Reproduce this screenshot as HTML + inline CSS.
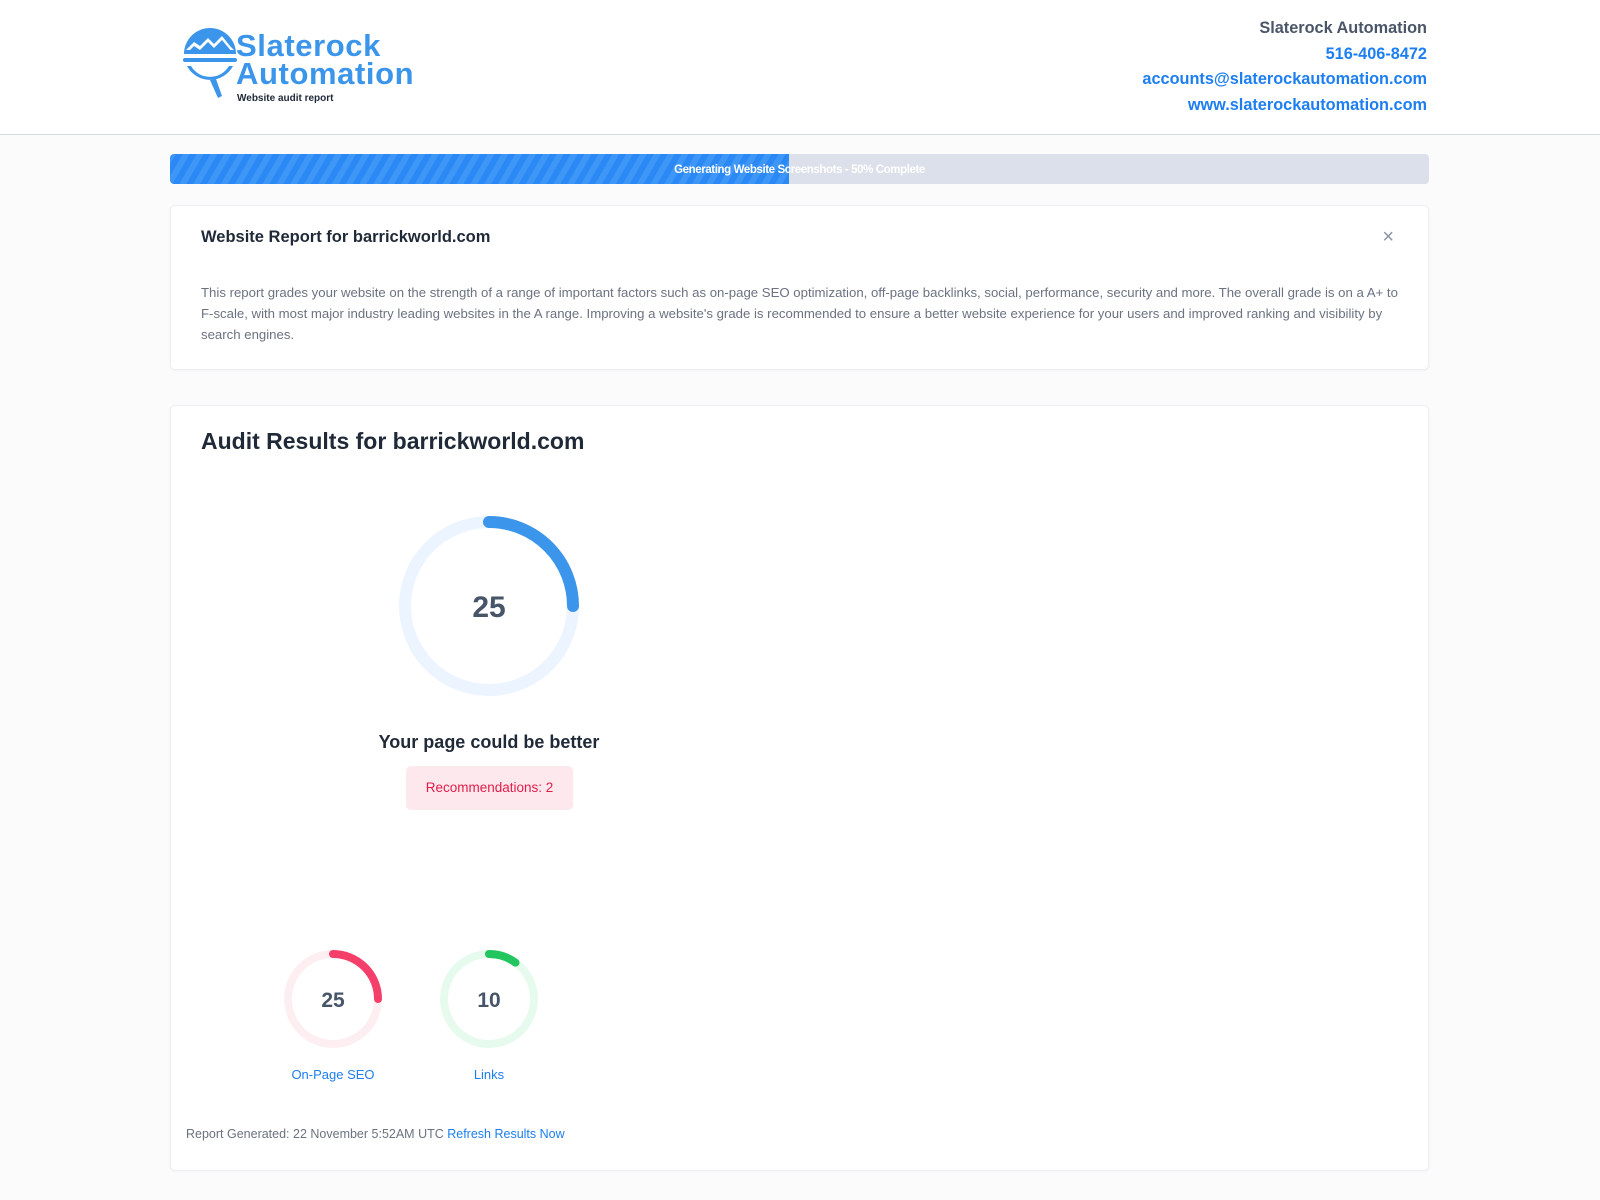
<!DOCTYPE html>
<html><head><meta charset="utf-8"><style>
*{margin:0;padding:0;box-sizing:border-box}
body{width:1600px;height:1200px;background:#fbfbfc;font-family:"Liberation Sans",sans-serif;position:relative;overflow:hidden}
.hdr{position:absolute;left:0;top:0;width:1600px;height:135px;background:#fff;border-bottom:1px solid #d5d8de}
.abs{position:absolute}
.rt{right:173px;text-align:right;font-size:16.3px;font-weight:bold;white-space:nowrap}
.card{position:absolute;left:170px;width:1259px;background:#fff;border:1px solid #eceef2;border-radius:5px;box-shadow:0 1px 3px rgba(0,0,0,.04)}
</style></head><body>
<div class="hdr">
<svg class="abs" style="left:180px;top:24px" width="60" height="78" viewBox="0 0 60 78">
<path d="M4 30 A26 26 0 0 1 56 30 Z" fill="#3b95ea"/>
<path d="M6 26 L14 18 L20 22 L28 14 L34 20 L42 12 L50 22 L54 26 Z" fill="#fff"/>
<path d="M8 28 L14 22 L20 26 L28 18 L34 24 L42 16 L52 28 Z" fill="#3b95ea"/>
<rect x="3" y="34" width="54" height="4" rx="2" fill="#3b95ea"/>
<path d="M7 42 A26 26 0 0 0 53 42 L49 42 A22 22 0 0 1 11 42Z" fill="#3b95ea"/>
<path d="M30 56 L38 74 L42 72 L36 55Z" fill="#3b95ea"/>
</svg>
<div class="abs" style="left:236px;top:32px;font-size:31px;font-weight:bold;color:#3b95ea;line-height:28px;letter-spacing:0.6px">Slaterock<br>Automation</div>
<div class="abs" style="left:237px;top:93px;font-size:10px;font-weight:bold;color:#1f2937">Website audit report</div>
<div class="abs rt" style="top:19px;color:#4a5568">Slaterock Automation</div>
<div class="abs rt" style="top:45px;color:#1c7ef0">516-406-8472</div>
<div class="abs rt" style="top:70px;color:#1c7ef0">accounts@slaterockautomation.com</div>
<div class="abs rt" style="top:96px;color:#1c7ef0">www.slaterockautomation.com</div>
</div>
<div class="abs" style="left:170px;top:154px;width:1259px;height:30px;background:#dce0ea;border-radius:4px;overflow:hidden">
<div style="width:619px;height:30px;background:repeating-linear-gradient(-60deg,#2a89f5 0 6px,#3e96f7 6px 12px)"></div>
<div class="abs" style="left:0;top:0;width:1259px;text-align:center;line-height:32px;font-size:11.5px;font-weight:bold;color:#fff;letter-spacing:-0.4px">Generating Website Screenshots - 50% Complete</div>
</div>
<div class="card" style="top:205px;height:165px">
<div class="abs" style="left:30px;top:22px;font-size:16.5px;font-weight:bold;color:#1f2937">Website Report for barrickworld.com</div>
<div class="abs" style="right:34px;top:20px;font-size:20px;color:#8b95a3">×</div>
<div class="abs" style="left:30px;top:76px;width:1200px;font-size:13.2px;line-height:21px;color:#6b7280">This report grades your website on the strength of a range of important factors such as on-page SEO optimization, off-page backlinks, social, performance, security and more. The overall grade is on a A+ to F-scale, with most major industry leading websites in the A range. Improving a website's grade is recommended to ensure a better website experience for your users and improved ranking and visibility by search engines.</div>
</div>
<div class="card" style="top:405px;height:766px">
<div class="abs" style="left:30px;top:22px;font-size:23px;font-weight:bold;color:#1f2937">Audit Results for barrickworld.com</div>
<svg class="abs" style="left:228px;top:110px" width="180" height="180" viewBox="0 0 180 180">
<circle cx="90" cy="90" r="84" fill="none" stroke="#ebf4ff" stroke-width="12"/>
<path d="M90 6 A84 84 0 0 1 174 90" fill="none" stroke="#3b95ea" stroke-width="12" stroke-linecap="round"/>
<text x="90" y="101" text-anchor="middle" font-family="Liberation Sans" font-weight="bold" font-size="30" fill="#475569">25</text>
</svg>
<div class="abs" style="left:168px;top:326px;width:300px;text-align:center;font-size:18px;font-weight:bold;color:#1f2937">Your page could be better</div>
<div class="abs" style="left:235px;top:360px;width:167px;height:44px;background:#fde8ee;border-radius:5px;text-align:center;line-height:44px;font-size:13.5px;color:#e11d48">Recommendations: 2</div>
<svg class="abs" style="left:113px;top:544px" width="98" height="98" viewBox="0 0 98 98">
<circle cx="49" cy="49" r="45" fill="none" stroke="#fdeef2" stroke-width="8"/>
<path d="M49 4 A45 45 0 0 1 94 49" fill="none" stroke="#f43f6b" stroke-width="8" stroke-linecap="round"/>
<text x="49" y="57" text-anchor="middle" font-family="Liberation Sans" font-weight="bold" font-size="21" fill="#475569">25</text>
</svg>
<svg class="abs" style="left:269px;top:544px" width="98" height="98" viewBox="0 0 98 98">
<circle cx="49" cy="49" r="45" fill="none" stroke="#e6fbee" stroke-width="8"/>
<path d="M49 4 A45 45 0 0 1 75.5 12.6" fill="none" stroke="#22c55e" stroke-width="8" stroke-linecap="round"/>
<text x="49" y="57" text-anchor="middle" font-family="Liberation Sans" font-weight="bold" font-size="21" fill="#475569">10</text>
</svg>
<div class="abs" style="left:102px;top:661px;width:120px;text-align:center;font-size:13px;color:#1c7ef0">On-Page SEO</div>
<div class="abs" style="left:258px;top:661px;width:120px;text-align:center;font-size:13px;color:#1c7ef0">Links</div>
<div class="abs" style="left:15px;top:721px;font-size:12.5px;color:#6b7280">Report Generated: 22 November 5:52AM UTC <span style="color:#1c7ef0">Refresh Results Now</span></div>
</div>
</body></html>
